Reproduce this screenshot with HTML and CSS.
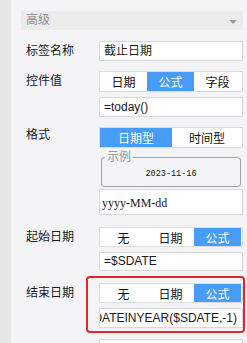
FILE: index.html
```html
<!DOCTYPE html>
<html lang="zh">
<head>
<meta charset="utf-8">
<link rel="stylesheet" href="styles.css">
</head>
<body>
<div class="strip"></div>
<div class="panel">
  <div class="header"><span>高级</span><span class="caret"></span></div>

  <div class="row r1">
    <div class="label">标签名称</div>
    <div class="ctl">
      <div class="input">截止日期</div>
    </div>
  </div>

  <div class="row r2">
    <div class="label">控件值</div>
    <div class="ctl">
      <div class="seg three"><span>日期</span><span class="on">公式</span><span>字段</span></div>
      <div class="input gap5">=today()</div>
    </div>
  </div>

  <div class="row r3">
    <div class="label lab-fmt">格式</div>
    <div class="ctl">
      <div class="seg two"><span class="on">日期型</span><span>时间型</span></div>
      <fieldset class="sample"><legend>示例</legend><div class="date">2023-11-16</div></fieldset>
      <div class="input pattern">yyyy-MM-dd</div>
    </div>
  </div>

  <div class="row r4">
    <div class="label">起始日期</div>
    <div class="ctl">
      <div class="seg three short"><span>无</span><span>日期</span><span class="on">公式</span></div>
      <div class="input gap5 thin">=$SDATE</div>
    </div>
  </div>

  <div class="row r5">
    <div class="label">结束日期</div>
    <div class="ctl boxed">
      <div class="seg three short"><span>无</span><span>日期</span><span class="on">公式</span></div>
      <div class="input gap5 scroll"><span>=DATEINYEAR($SDATE,-1)</span></div>
      <div class="highlight"></div>
    </div>
  </div>

  <div class="row r6">
    <div class="label"></div>
    <div class="ctl">
      <div class="input"></div>
    </div>
  </div>
</div>
</body>
</html>
```
FILE: styles.css
```css
* { box-sizing: border-box; }
html, body { margin: 0; padding: 0; }
body {
  display: flex;
  height: 343px;
  overflow: hidden;
  background: #f4f4f6;
  font-family: "Liberation Sans", "Noto Sans CJK SC", sans-serif;
  font-size: 12px;
  color: #1a1a1a;
}
.strip { width: 11px; flex: none; background: #e6e6e6; }
.panel { flex: 1; padding: 11px 4px 0 10px; }
.header {
  height: 19px;
  background: #ebebeb;
  color: #8c8c8c;
  display: flex;
  align-items: center;
  justify-content: space-between;
  padding: 0 6px 0 5px;
  line-height: 19px;
}
.caret {
  width: 0; height: 0;
  border-left: 4px solid transparent;
  border-right: 4px solid transparent;
  border-top: 4px solid #9a9a9a;
  margin-top: 3px;
}
.row { display: flex; }
.r1 { margin-top: 11px; }
.r2 { margin-top: 10px; }
.r3 { margin-top: 10px; }
.r4 { margin-top: 12px; }
.r5 { margin-top: 12px; }
.r6 { margin-top: 11px; }
.label {
  width: 78px;
  flex: none;
  padding-left: 5px;
  line-height: 20px;
  color: #1a1a1a;
}
.lab-fmt { line-height: 17px; }
.ctl { width: 144px; display: flex; flex-direction: column; position: relative; }
.input {
  height: 20px;
  background: #fff;
  border: 1px solid #d9d9dc;
  padding: 0 4px;
  line-height: 18px;
  white-space: nowrap;
  overflow: hidden;
}
.gap5 { margin-top: 5px; }
.thin { height: 19px; line-height: 17px; }
.seg {
  height: 21px;
  background: #fff;
  border: 1px solid #dcdcdf;
  display: grid;
}
.seg.short { height: 20px; }
.seg.three { grid-template-columns: 1fr 1fr 1fr; padding-right: 1px; }
.seg.two { grid-template-columns: 72px 1fr; }
.seg span {
  display: flex;
  align-items: center;
  justify-content: center;
  color: #111;
  font-size: 12px;
}
.seg span.on { background: #479cf7; color: #fff; }
.sample {
  margin: 3px 2px 0;
  padding: 0 0 0 3px;
  border: 1px solid #a3a3a3;
  border-radius: 3px;
  height: 36px;
  min-width: 0;
}
.sample legend {
  padding: 0 2px;
  color: #9a9a9a;
  font-size: 12px;
  line-height: 12px;
}
.date {
  text-align: center;
  font-family: "Liberation Mono", monospace;
  font-size: 8.5px;
  line-height: 22px;
  color: #111;
  margin-left: -3px;
}
.pattern {
  margin-top: 2px;
  height: 26px;
  line-height: 26px;
  padding-left: 2px;
  font-family: "Liberation Serif", serif;
  font-size: 12px;
}
.scroll {
  display: flex;
  justify-content: flex-end;
  padding-right: 5px;
}
.scroll span { flex: none; }
.highlight {
  position: absolute;
  top: -7px;
  left: -13px;
  right: -2px;
  bottom: -5px;
  border: 2px solid #e5262b;
  border-radius: 4px;
  pointer-events: none;
}
```
